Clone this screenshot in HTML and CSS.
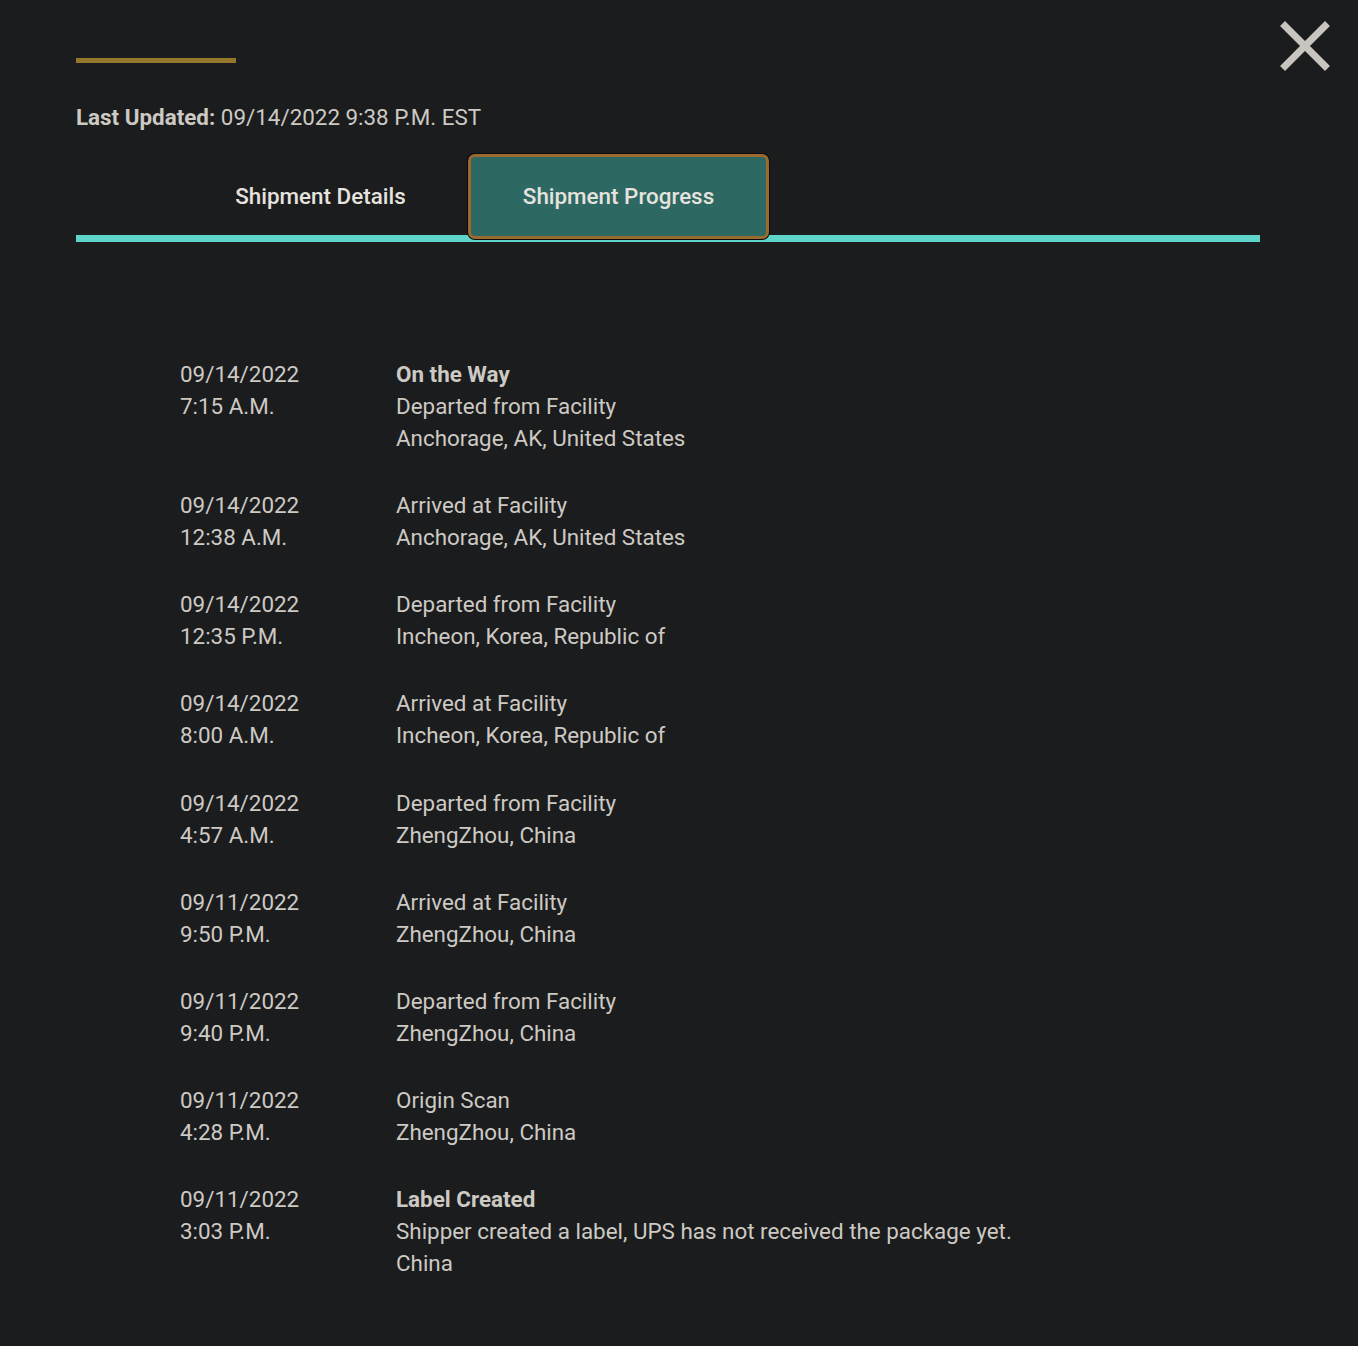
FILE: index.html
```html
<!DOCTYPE html>
<html lang="en">
<head>
    <meta charset="UTF-8">
    <meta name="viewport" content="width=device-width, initial-scale=1.0">
    <title>Shipment Progress</title>
    <link rel="stylesheet" href="styles.css">
</head>
<body>
    <div class="modal">
        <button class="close-btn" type="button" aria-label="Close">
            <svg width="56" height="56" viewBox="0 0 56 56">
                <path d="M8 8 L48 48 M48 8 L8 48" stroke="#c8c4be" stroke-width="7" stroke-linecap="square" fill="none"/>
            </svg>
        </button>

        <div class="accent-bar"></div>

        <p class="last-updated"><strong>Last Updated:</strong> 09/14/2022 9:38 P.M. EST</p>

        <div class="tabs">
            <button class="tab" type="button">Shipment Details</button>
            <button class="tab active" type="button">Shipment Progress</button>
        </div>
        <div class="tab-line"></div>

        <ul class="timeline">
            <li class="event">
                <div class="event-time">09/14/2022<br>7:15 A.M.</div>
                <div class="event-info">
                    <strong>On the Way</strong><br>
                    Departed from Facility<br>
                    Anchorage, AK, United States
                </div>
            </li>
            <li class="event">
                <div class="event-time">09/14/2022<br>12:38 A.M.</div>
                <div class="event-info">Arrived at Facility<br>Anchorage, AK, United States</div>
            </li>
            <li class="event">
                <div class="event-time">09/14/2022<br>12:35 P.M.</div>
                <div class="event-info">Departed from Facility<br>Incheon, Korea, Republic of</div>
            </li>
            <li class="event">
                <div class="event-time">09/14/2022<br>8:00 A.M.</div>
                <div class="event-info">Arrived at Facility<br>Incheon, Korea, Republic of</div>
            </li>
            <li class="event">
                <div class="event-time">09/14/2022<br>4:57 A.M.</div>
                <div class="event-info">Departed from Facility<br>ZhengZhou, China</div>
            </li>
            <li class="event">
                <div class="event-time">09/11/2022<br>9:50 P.M.</div>
                <div class="event-info">Arrived at Facility<br>ZhengZhou, China</div>
            </li>
            <li class="event">
                <div class="event-time">09/11/2022<br>9:40 P.M.</div>
                <div class="event-info">Departed from Facility<br>ZhengZhou, China</div>
            </li>
            <li class="event">
                <div class="event-time">09/11/2022<br>4:28 P.M.</div>
                <div class="event-info">Origin Scan<br>ZhengZhou, China</div>
            </li>
            <li class="event">
                <div class="event-time">09/11/2022<br>3:03 P.M.</div>
                <div class="event-info">
                    <strong>Label Created</strong><br>
                    Shipper created a label, UPS has not received the package yet.<br>
                    China
                </div>
            </li>
        </ul>
    </div>
</body>
</html>
```

FILE: styles.css
```css
* {
    box-sizing: border-box;
    margin: 0;
    padding: 0;
}

body {
    font-family: Roboto, "Liberation Sans", Arial, sans-serif;
    background: #1b1c1e;
    color: #cdc9c3;
    min-height: 1346px;
}

.modal {
    position: relative;
    width: 1184px;
    margin-left: 76px;
    padding-top: 58px;
}

.close-btn {
    position: absolute;
    top: 18px;
    right: -73px;
    background: none;
    border: none;
    cursor: pointer;
    line-height: 0;
}

.accent-bar {
    width: 160px;
    height: 5px;
    background: #94772a;
}

.last-updated {
    margin-top: 42px;
    font-size: 22.4px;
    line-height: 24px;
}

.last-updated strong {
    font-weight: 700;
}

.tabs {
    display: flex;
    margin-top: 25px;
    padding-left: 92px;
}

.tab {
    width: 300px;
    height: 85px;
    padding-left: 5px;
    padding-bottom: 2px;
    background: none;
    border: none;
    font-family: inherit;
    font-size: 22.4px;
    font-weight: 500;
    color: #e6e3de;
    cursor: pointer;
}

.tab.active {
    position: relative;
    z-index: 1;
    width: 301px;
    padding-left: 0;
    background: #2d6863;
    border: 3px solid #9a6a30;
    border-radius: 7px;
    box-shadow: 0 0 0 1px #0b0b0b;
}

.tab-line {
    height: 7px;
    margin-top: -4px;
    background: #5fd5c9;
}

.timeline {
    list-style: none;
    padding: 116px 0 0 104px;
}

.event {
    display: flex;
    font-size: 22.4px;
    line-height: 32px;
    margin-bottom: 35.15px;
}

.event-time {
    width: 216px;
    flex-shrink: 0;
}

.event-info strong {
    font-weight: 700;
}
```
